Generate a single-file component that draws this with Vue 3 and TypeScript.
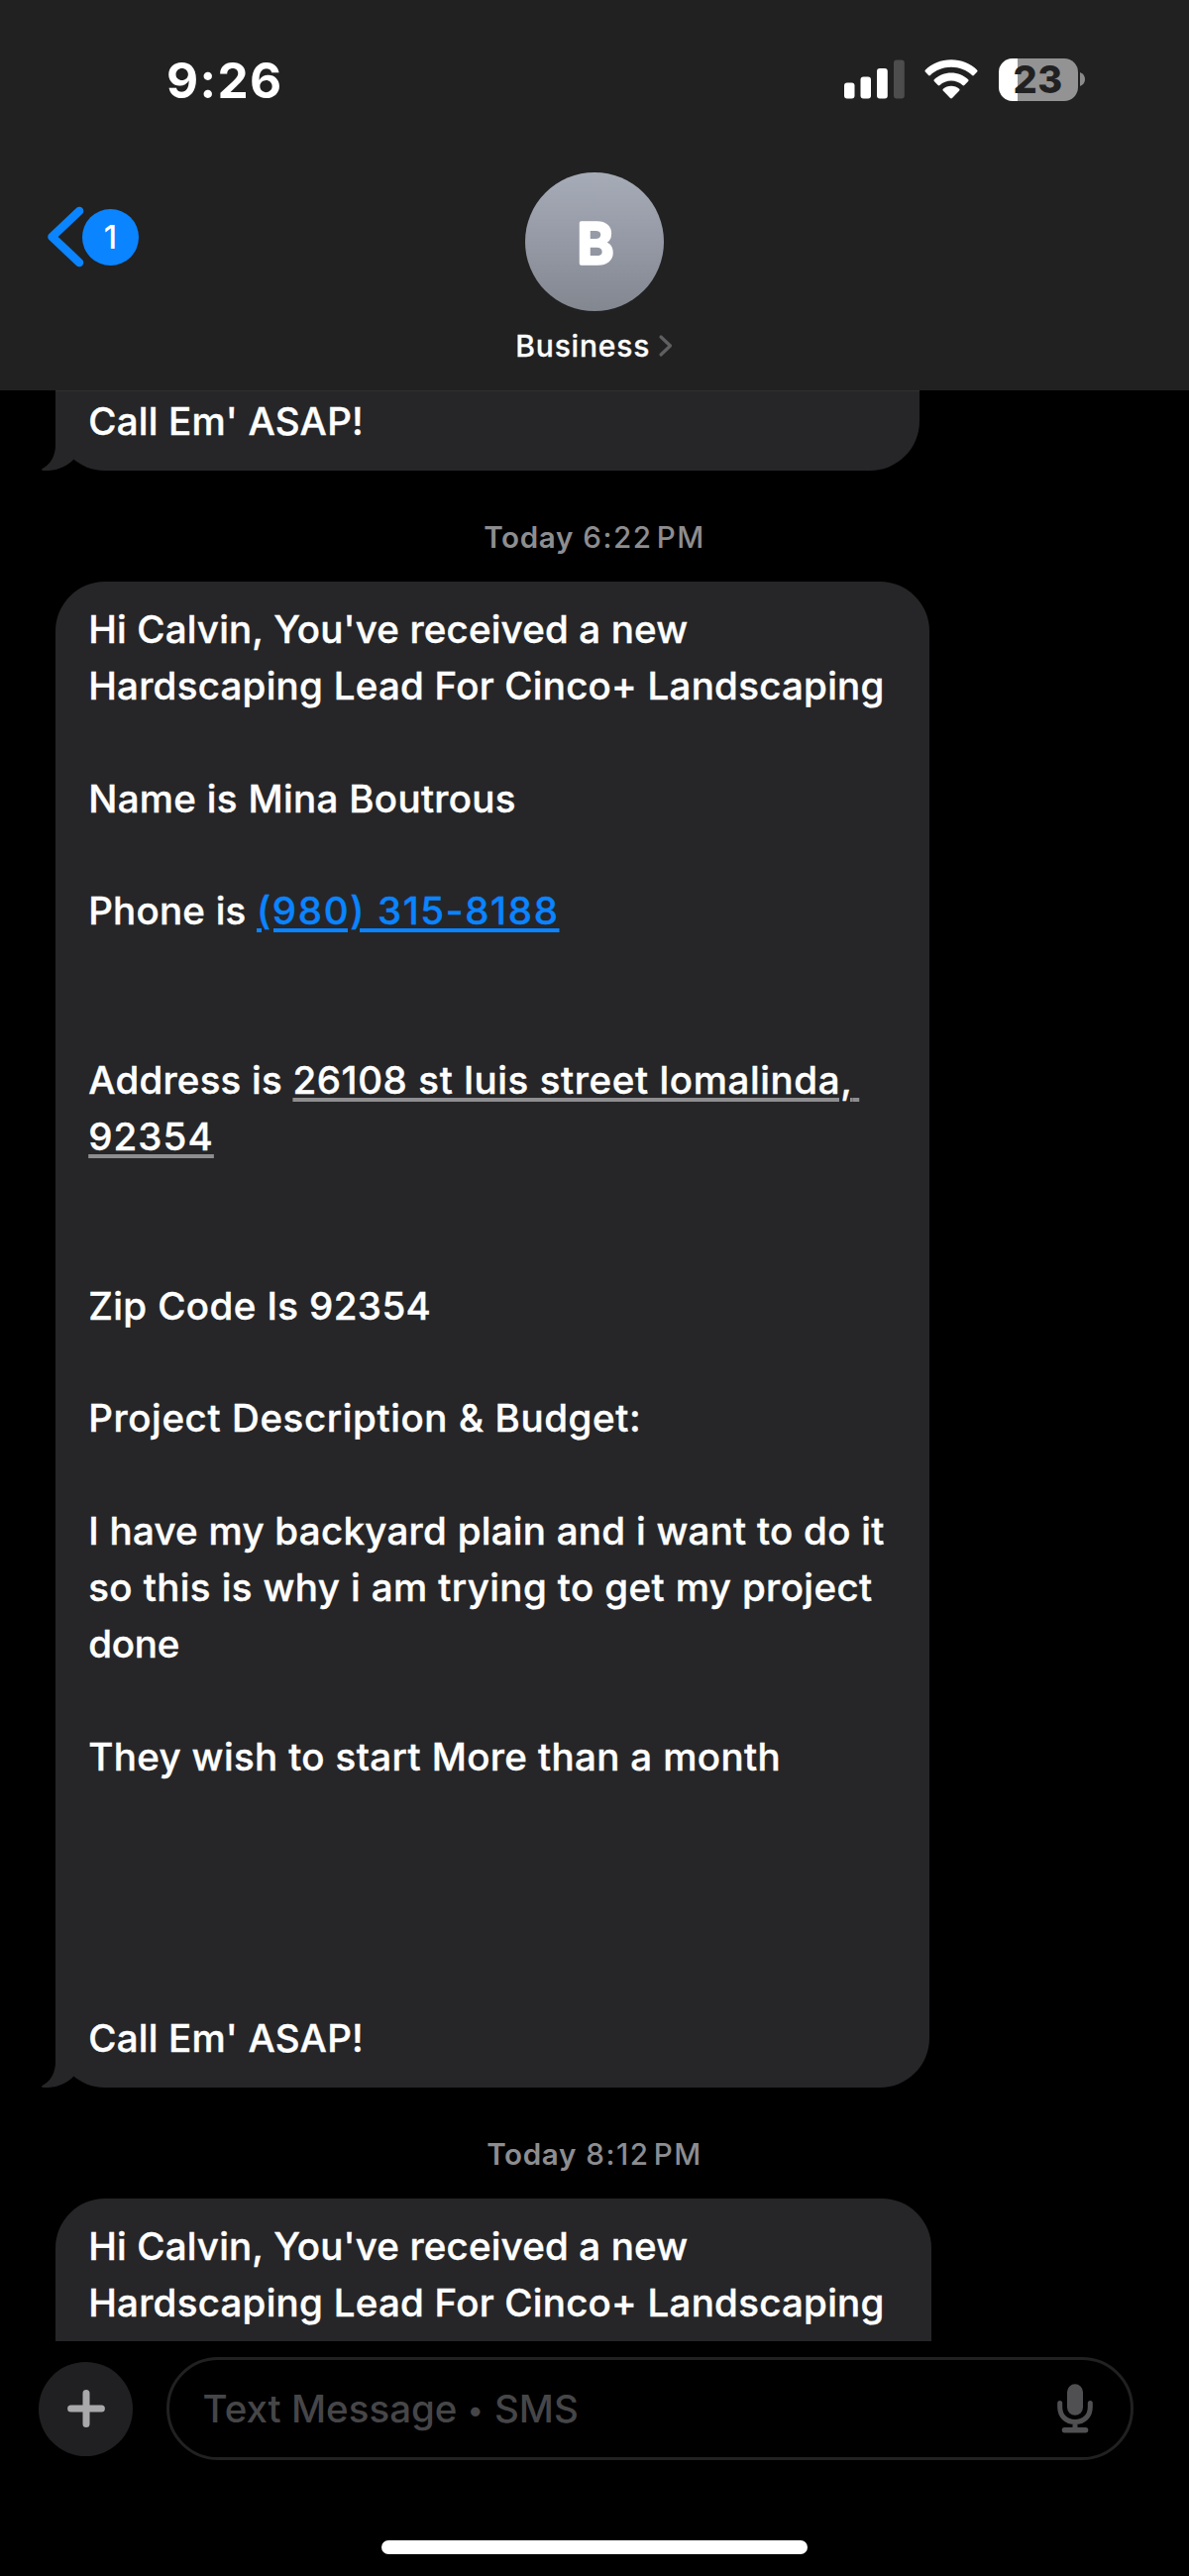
<script setup lang="ts">
interface Segment {
  text: string
  kind?: 'tel' | 'address' | 'address tight'
}

interface Line {
  segments: Segment[]
  tracking?: number
}

const line = (text: string, tracking = 0): Line => ({ segments: [{ text }], tracking })
const blank: Line = { segments: [] }

const intro: Line[] = [
  line("Hi Calvin, You've received a new", 0.16),
  line('Hardscaping Lead For Cinco+ Landscaping', 0.25),
]

const lead: Line[] = [
  ...intro,
  blank,
  line('Name is Mina Boutrous', 0.32),
  blank,
  { segments: [{ text: 'Phone is ' }, { text: '(980) 315-8188', kind: 'tel' }] },
  blank,
  blank,
  {
    segments: [
      { text: 'Address is ' },
      { text: '26108 st luis street lomalinda,', kind: 'address' },
      { text: ' ', kind: 'address tight' },
    ],
  },
  { segments: [{ text: '92354', kind: 'address' }] },
  blank,
  blank,
  line('Zip Code Is 92354', 0.4),
  blank,
  line('Project Description & Budget:', 0.6),
  blank,
  line('I have my backyard plain and i want to do it', 0.27),
  line('so this is why i am trying to get my project', 0.4),
  line('done', -0.2),
  blank,
  line('They wish to start More than a month', 0.37),
  blank,
  blank,
  blank,
  blank,
  line("Call Em' ASAP!"),
]
</script>

<template>
  <div class="phone">
    <header class="header">
      <div class="status">
        <span class="clock">9:26</span>
        <div class="status-icons">
          <svg class="signal" width="62" height="40" viewBox="0 0 62 40">
            <rect x="0" y="23.5" width="10.5" height="16" rx="3" fill="#fff" />
            <rect x="16.5" y="17.5" width="10.5" height="22" rx="3" fill="#fff" />
            <rect x="33" y="9" width="10.8" height="30.5" rx="3" fill="#fff" />
            <rect x="50" y="0.5" width="10.8" height="39" rx="3" fill="#4d4d4d" />
          </svg>
          <svg class="wifi" width="54" height="40" viewBox="0 0 54 40">
            <path d="M27 0.3C37.2 0.3 46.5 4.2 53.2 10.7Q54 11.6 53.2 12.5L49.9 16Q49 16.8 48.1 16C42.6 10.8 35.2 7.8 27 7.8S11.4 10.8 5.9 16Q5 16.8 4.1 16L.8 12.5Q0 11.6 .8 10.7C7.5 4.2 16.8 .3 27 .3Z" fill="#fff" />
            <path d="M27 13.5C33.6 13.5 39.7 16 44.2 20.2Q45 21.1 44.2 22L40.3 26Q39.4 26.8 38.5 26C35.4 23.2 31.4 21.6 27 21.6S18.6 23.2 15.5 26Q14.6 26.8 13.7 26L9.8 22Q9 21.1 9.8 20.2C14.3 16 20.4 13.5 27 13.5Z" fill="#fff" />
            <path d="M27 26.8C30.2 26.8 33 27.9 35.2 29.8Q36 30.7 35.2 31.6L28 39Q27 39.9 26 39L18.8 31.6Q18 30.7 18.8 29.8C21 27.9 23.8 26.8 27 26.8Z" fill="#fff" />
          </svg>
          <div class="battery">
            <div class="battery-body"><span class="battery-level">23</span></div>
            <svg width="5" height="14" viewBox="0 0 5 14"><path d="M0 0Q5 2 5 7T0 14Z" fill="#8b8b8b" /></svg>
          </div>
        </div>
      </div>
      <div class="nav">
        <div class="back">
          <svg width="38" height="62" viewBox="0 0 38 62">
            <path d="M32 5L4.5 31L32 57" fill="none" stroke="#0a84ff" stroke-width="8.6" stroke-linecap="round" stroke-linejoin="round" />
          </svg>
          <span class="badge">1</span>
        </div>
        <div class="contact">
          <div class="avatar">
            <svg width="140" height="140" viewBox="0 0 140 140">
              <text class="initial" x="71" y="92" text-anchor="middle">B</text>
            </svg>
          </div>
          <div class="name">
            <span>Business</span>
            <svg width="16" height="24" viewBox="0 0 16 24">
              <path d="M3 3L12.5 12L3 21" fill="none" stroke="#5f5f62" stroke-width="3.2" stroke-linecap="round" stroke-linejoin="round" />
            </svg>
          </div>
        </div>
      </div>
    </header>

    <main class="thread">
      <div class="bubble previous">
        <p class="line">Call Em' ASAP!</p>
        <svg class="tail" width="50" height="60" viewBox="0 0 50 60">
          <path d="M15 0V34C15 45 10 54 1 58.500Q.3 59.600 3 59.900C15 61 26 56 33 49L46 20V0Z" fill="#262628" />
        </svg>
      </div>

      <p class="stamp"><b>Today</b> <span class="time">6:22 PM</span></p>

      <div class="bubble current">
        <p v-for="(row, i) in lead" :key="i" class="line" :style="{ letterSpacing: row.tracking ? row.tracking + 'px' : undefined }"><span v-for="(part, j) in row.segments" :key="j" :class="part.kind">{{ part.text }}</span></p>
        <svg class="tail" width="50" height="60" viewBox="0 0 50 60">
          <path d="M15 0V34C15 45 10 54 1 58.500Q.3 59.600 3 59.900C15 61 26 56 33 49L46 20V0Z" fill="#262628" />
        </svg>
      </div>

      <p class="stamp"><b>Today</b> <span class="time">8:12 PM</span></p>

      <div class="bubble next">
        <p v-for="(row, i) in intro" :key="i" class="line" :style="{ letterSpacing: row.tracking + 'px' }"><span v-for="(part, j) in row.segments" :key="j">{{ part.text }}</span></p>
      </div>
    </main>

    <footer class="composer">
      <div class="compose-row">
        <div class="add">
          <svg width="38" height="38" viewBox="0 0 38 38">
            <path d="M19 3.6V34.4M3.6 19H34.4" stroke="#a9a9ac" stroke-width="7" stroke-linecap="round" />
          </svg>
        </div>
        <div class="field">
          <span class="placeholder">Text Message <span class="dot">•</span> SMS</span>
          <svg class="mic" width="36" height="50" viewBox="0 0 36 50">
            <rect x="10" y="0.3" width="16" height="31.5" rx="8" fill="#505052" />
            <path d="M2.7 19.5V23.5C2.7 32.5 9 38.5 18 38.5S33.3 32.5 33.3 23.5V19.5M18 38.5V46" fill="none" stroke="#505052" stroke-width="5" stroke-linecap="round" />
            <path d="M7.4 46.7H28.6" stroke="#505052" stroke-width="5.4" stroke-linecap="round" />
          </svg>
        </div>
      </div>
      <div class="home"></div>
    </footer>
  </div>
</template>

<style>
body {
  margin: 0;
  background: #000;
}
</style>

<style scoped>
.phone {
  display: flex;
  flex-direction: column;
  width: 1200px;
  height: 2600px;
  overflow: hidden;
  background: #000;
  color: #fff;
  font-family: Inter, 'Liberation Sans', sans-serif;
}

p {
  margin: 0;
}

svg {
  display: block;
  flex: none;
}

.header {
  box-sizing: border-box;
  flex: none;
  height: 394px;
  background: #212121;
}

.status {
  box-sizing: border-box;
  display: flex;
  justify-content: space-between;
  height: 174px;
  padding: 51px 105px 0 168px;
}

.clock {
  font-size: 49.5px;
  font-weight: 700;
  line-height: 60px;
  letter-spacing: 1.4px;
}

.status-icons {
  display: flex;
  align-items: flex-start;
  padding-top: 8px;
}

.signal {
  margin-top: 1px;
}

.wifi {
  margin: 1px 20.5px 0 19.5px;
}

.battery {
  display: flex;
  align-items: center;
  gap: 2.3px;
}

.battery-body {
  width: 80px;
  height: 42.5px;
  border-radius: 14px;
  background: linear-gradient(90deg, #fff 19px, #939393 19px);
  color: #212121;
  text-align: center;
}

.battery-level {
  font-size: 38px;
  font-weight: 800;
  line-height: 43px;
  letter-spacing: 0.6px;
}

.nav {
  display: grid;
  grid-template-columns: 1fr auto 1fr;
}

.back {
  display: flex;
  align-items: center;
  align-self: start;
  margin: 34px 0 0 47.5px;
}

.badge {
  width: 57px;
  height: 57px;
  margin-left: -2.5px;
  border-radius: 50%;
  background: #0a84ff;
  font-size: 32px;
  font-weight: 500;
  line-height: 57px;
  text-align: center;
}

.contact {
  display: flex;
  flex-direction: column;
  align-items: center;
}

.avatar {
  width: 140px;
  height: 140px;
  border-radius: 50%;
  background: linear-gradient(#a6acb7, #9599a5 50%, #838790);
}

.initial {
  fill: #fff;
  stroke: #fff;
  stroke-width: 3.6px;
  stroke-linejoin: round;
  font-size: 56px;
  font-weight: 600;
}

.name {
  display: flex;
  align-items: center;
  gap: 7.5px;
  margin-top: 17px;
  font-size: 30px;
  font-weight: 500;
  line-height: 36px;
  letter-spacing: 0.8px;
  -webkit-text-stroke: 0.3px #fff;
}

.thread {
  flex: none;
  height: 1969px;
  overflow: hidden;
}

.bubble {
  position: relative;
  box-sizing: border-box;
  margin-left: 56px;
  padding: 20px 0 0 33.2px;
  border-radius: 50px;
  background: #262628;
}

.previous {
  width: 871.5px;
  height: 81px;
  padding-top: 1.5px;
  border-top: 1px solid #303032;
  border-radius: 0 0 50px 50px;
}

.current {
  width: 882px;
  height: 1520px;
}

.next {
  width: 883.5px;
  height: 240px;
}

.line {
  height: 56.9px;
  font-size: 38.5px;
  font-weight: 500;
  line-height: 56.9px;
  letter-spacing: 0.22px;
  white-space: pre;
  -webkit-text-stroke: 0.4px currentColor;
}

.tel,
.address {
  text-decoration: underline;
  text-decoration-thickness: 4px;
  text-underline-offset: 4px;
}

.tel {
  color: #0a84ff;
  letter-spacing: 1.65px;
}

.address {
  letter-spacing: 0.6px;
  text-decoration-color: #8e8e90;
}

.address:first-child {
  letter-spacing: 1.1px;
}

.address.tight {
  letter-spacing: -3.5px;
}

.tail {
  position: absolute;
  left: -15px;
  bottom: 0;
}

.stamp {
  height: 89px;
  padding-top: 23px;
  color: #8d8d90;
  font-size: 29.6px;
  line-height: 89px;
  text-align: center;
}

.stamp b {
  font-weight: 600;
  letter-spacing: 0.65px;
}

.time {
  margin-left: 1px;
  font-weight: 450;
  letter-spacing: 1.5px;
  word-spacing: -5px;
}

.composer {
  flex: 1;
}

.compose-row {
  display: flex;
  align-items: center;
  margin: 16px 56px 0 39px;
}

.add {
  display: flex;
  align-items: center;
  justify-content: center;
  width: 95px;
  height: 95px;
  border-radius: 50%;
  background: #202022;
}

.field {
  box-sizing: border-box;
  display: flex;
  flex: 1;
  align-items: center;
  justify-content: space-between;
  height: 104px;
  margin-left: 34px;
  padding: 0 38.5px 0 33.5px;
  border: 3px solid #212122;
  border-radius: 52px;
}

.placeholder {
  color: #464648;
  font-size: 38.5px;
  font-weight: 450;
  line-height: 50px;
}

.dot {
  display: inline-block;
  margin: 0 1px 0 0;
  font-size: 30px;
  line-height: 20px;
  vertical-align: 2.5px;
}

.home {
  width: 430px;
  height: 14.5px;
  margin: 80.5px auto 0;
  border-radius: 8px;
  background: #fff;
}
</style>
